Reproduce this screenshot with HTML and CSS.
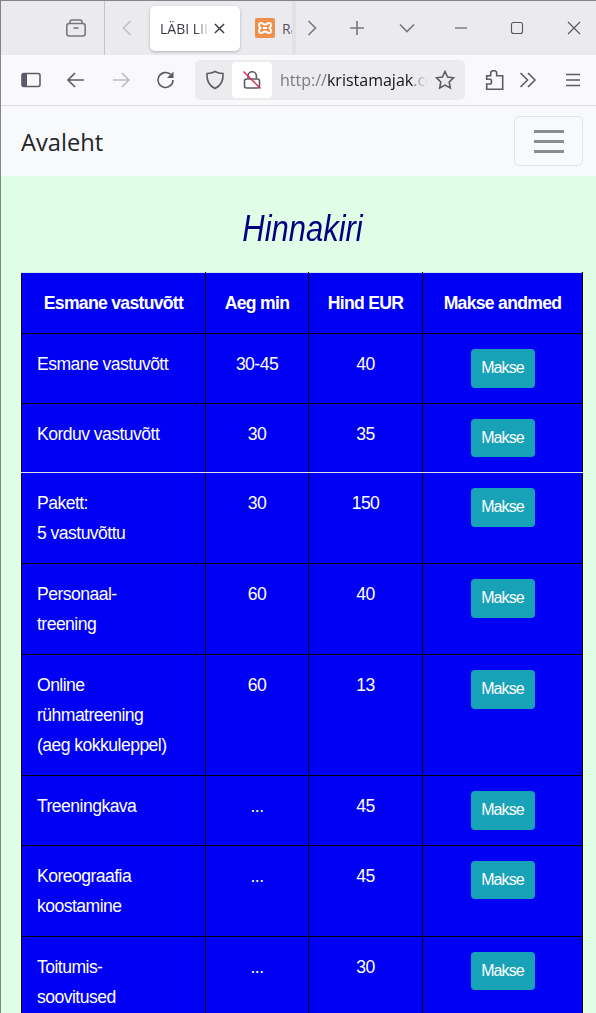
FILE: index.html
```html
<!DOCTYPE html>
<html lang="et">
<head>
  <meta charset="UTF-8" />
  <meta name="viewport" content="width=device-width, initial-scale=1.0"/>
  <title>Hinnakiri</title>
  <link rel="stylesheet" href="styles.css">
</head>
<body>
  <!-- Browser tab strip -->
  <div class="tabstrip">
    <svg class="icon view-icon" viewBox="0 0 20 20"><path d="M4 5.500 V4 a2 2 0 0 1 2-2 h8 a2 2 0 0 1 2 2 V5.500"/><rect x="0.800" y="5.500" width="18.400" height="12.500" rx="2.500"/><path d="M7.500 10 h5"/></svg>
    <div class="strip-divider"></div>
    <svg class="icon tabs-left" viewBox="0 0 20 20"><path d="M13.500 3 L6.500 10 L13.500 17"/></svg>
    <div class="tab">
      <span class="tab-title">LÄBI LIIGU</span>
      <svg class="tab-close" viewBox="0 0 12 12"><path d="M1 1 L11 11 M11 1 L1 11"/></svg>
    </div>
    <svg class="favicon" viewBox="0 0 20 20"><rect width="20" height="20" rx="2" fill="#ee8f4a"/><path d="M6 5 C8 5 8.500 6.500 10 6.500 C11.500 6.500 12 5 14 5 C16.500 5 16.500 8.500 14.500 10 C16.500 11.500 16.500 15 14 15 C12 15 11.500 13.500 10 13.500 C8.500 13.500 8 15 6 15 C3.500 15 3.500 11.500 5.500 10 C3.500 8.500 3.500 5 6 5 Z M8 10 h4" fill="none" stroke="#fff" stroke-width="2"/></svg>
    <span class="tab-next">Ra</span>
    <div class="tab-sep"></div>
    <svg class="icon tabs-right" viewBox="0 0 20 20"><path d="M6.500 3 L13.500 10 L6.500 17"/></svg>
    <svg class="icon new-tab" viewBox="0 0 20 20"><path d="M10 3 V17 M3 10 H17"/></svg>
    <svg class="icon all-tabs" viewBox="0 0 20 20"><path d="M3 6.500 L10 13.500 L17 6.500"/></svg>
    <svg class="win-icon win-min" viewBox="0 0 14 14"><path d="M1 7 H13"/></svg>
    <svg class="win-icon win-max" viewBox="0 0 14 14"><rect x="1.500" y="1.500" width="11" height="11" rx="2"/></svg>
    <svg class="win-icon win-close" viewBox="0 0 14 14"><path d="M1 1 L13 13 M13 1 L1 13"/></svg>
  </div>

  <!-- Browser toolbar -->
  <div class="toolbar">
    <svg class="tool tool-sidebar" viewBox="0 0 20 20"><rect x="1" y="3.500" width="18" height="13" rx="2"/><path class="filled" d="M1 5.500 a2 2 0 0 1 2-2 h3 v13 h-3 a2 2 0 0 1-2-2 Z"/></svg>
    <svg class="tool tool-back" viewBox="0 0 20 20"><path d="M18 10 H2 M9 3 L2 10 L9 17"/></svg>
    <svg class="tool tool-forward" viewBox="0 0 20 20"><path d="M2 10 H18 M11 3 L18 10 L11 17"/></svg>
    <svg class="tool tool-reload" viewBox="0 0 20 20"><path d="M17 10 A7.500 7.500 0 1 1 14.500 4.400"/><path class="filled" d="M17.500 1.500 V8 H11 Z"/></svg>
    <div class="urlbar">
      <svg class="tool url-shield" viewBox="0 0 20 20"><path d="M10 1.500 C12.500 3 15 3.500 18 3.500 C18.500 11 15.500 16 10 18.500 C4.500 16 1.500 11 2 3.500 C5 3.500 7.500 3 10 1.500 Z"/></svg>
      <div class="lock-box">
        <svg class="tool" viewBox="0 0 20 20"><path d="M6 8.500 V6 a4.200 4.200 0 0 1 8.400 0 V8.500"/><rect x="2.500" y="9" width="15" height="9" rx="2"/><path class="slash" d="M1.500 1.500 L18.500 18.500"/></svg>
      </div>
      <div class="url-text">http://<span class="url-host">kristamajak</span>.com</div>
      <svg class="tool url-star" viewBox="0 0 20 20"><path d="M10 1.500 L12.600 7 L18.500 7.800 L14.200 12 L15.300 18 L10 15.100 L4.700 18 L5.800 12 L1.500 7.800 L7.400 7 Z"/></svg>
    </div>
    <svg class="tool tool-ext" viewBox="0 0 20 20"><path d="M2.700 5.700 H6.700 V3 C6.700 0 12.700 0 12.700 3 V5.700 H18.700 V19.300 H2.700 V14 H6 C8 14 8 9.300 6 9.300 H2.700 Z"/></svg>
    <svg class="tool tool-more" viewBox="0 0 20 20"><path d="M2.500 3 L9.500 10 L2.500 17 M10 3 L17 10 L10 17"/></svg>
    <svg class="tool tool-menu" viewBox="0 0 20 20"><path d="M3 4.500 H17 M3 10 H17 M3 15.500 H17"/></svg>
  </div>

  <!-- Navigation Bar -->
  <nav class="navbar">
    <a class="brand" href="#">Avaleht</a>
    <button class="toggler"><span class="bar"></span><span class="bar"></span><span class="bar"></span></button>
  </nav>

  <div class="main-content">
    <h1>Hinnakiri</h1>
    <table class="price-table">
      <colgroup><col class="col-name"><col class="col-time"><col class="col-price"><col class="col-pay"></colgroup>
      <thead>
        <tr><th>Esmane vastuvõtt</th><th>Aeg min</th><th>Hind EUR</th><th>Makse andmed</th></tr>
      </thead>
      <tbody id="prices">
        <tr><td>Esmane vastuvõtt</td><td>30-45</td><td>40</td><td><a class="pay-btn">Makse</a></td></tr>
        <tr class="light-bottom"><td>Korduv vastuvõtt</td><td>30</td><td>35</td><td><a class="pay-btn">Makse</a></td></tr>
        <tr><td>Pakett:<br>5 vastuvõttu</td><td>30</td><td>150</td><td><a class="pay-btn">Makse</a></td></tr>
        <tr><td>Personaal-<br>treening</td><td>60</td><td>40</td><td><a class="pay-btn">Makse</a></td></tr>
        <tr><td>Online<br>rühmatreening<br>(aeg kokkuleppel)</td><td>60</td><td>13</td><td><a class="pay-btn">Makse</a></td></tr>
        <tr><td>Treeningkava</td><td>...</td><td>45</td><td><a class="pay-btn">Makse</a></td></tr>
        <tr><td>Koreograafia<br>koostamine</td><td>...</td><td>45</td><td><a class="pay-btn">Makse</a></td></tr>
        <tr><td>Toitumis-<br>soovitused</td><td>...</td><td>30</td><td><a class="pay-btn">Makse</a></td></tr>
      </tbody>
    </table>
  </div>
</body>
</html>
```
FILE: styles.css
```css
html, body {
  margin: 0;
  height: 1013px;
  overflow: hidden;
}

body {
  font-family: "Liberation Sans", Arial, sans-serif;
  background: #e0fee6;
  border-left: 1px solid #858585;
  border-top: 1px solid #858585;
  box-sizing: border-box;
}

/* Tab strip */
.tabstrip {
  display: flex;
  align-items: center;
  height: 54px;
  background: #ebebef;
}

.icon, .tool, .win-icon {
  flex: none;
  fill: none;
  stroke: #5b5b66;
  stroke-width: 1.6;
}

.icon {
  width: 20px;
  height: 20px;
  stroke: #77777f;
}

.view-icon { margin-left: 65px; }

.strip-divider {
  width: 1px;
  height: 54px;
  margin-left: 18px;
  background: #c4c4c8;
}

.tabs-left {
  margin-left: 12px;
  stroke: #c0c0c5;
}

.tab {
  display: flex;
  flex: none;
  align-items: center;
  width: 90px;
  height: 45px;
  margin-left: 13px;
  margin-top: 1px;
  background: #fff;
  border-radius: 5px;
  box-shadow: 0 1px 3px rgba(0,0,0,0.25);
  box-sizing: border-box;
  padding-left: 10px;
  font-family: "Open Sans", sans-serif;
  font-size: 14px;
  color: #3a3a42;
}

.tab-title {
  width: 50px;
  overflow: hidden;
  white-space: nowrap;
  -webkit-mask-image: linear-gradient(to right, #000 70%, transparent);
  mask-image: linear-gradient(to right, #000 70%, transparent);
}

.tab-close {
  flex: none;
  width: 11px;
  height: 11px;
  margin-left: 4px;
  fill: none;
  stroke: #3a3a42;
  stroke-width: 1.5;
}

.favicon {
  flex: none;
  width: 20px;
  height: 20px;
  margin-left: 15px;
}

.tab-next {
  flex: none;
  width: 10px;
  margin-left: 7px;
  overflow: hidden;
  font-family: "Open Sans", sans-serif;
  font-size: 14px;
  color: #55555c;
}

.tab-sep {
  flex: none;
  width: 4px;
  height: 54px;
  background: #e2e2e6;
}

.tabs-right { margin-left: 6px; }
.new-tab { margin-left: 25px; }
.all-tabs { margin-left: 30px; }

.win-icon {
  stroke: #55555c;
  stroke-width: 1.1;
  width: 14px;
  height: 14px;
}

.win-min { margin-left: 37px; }
.win-max { margin-left: 42px; }
.win-close { margin-left: 43px; }

/* Toolbar */
.toolbar {
  display: flex;
  align-items: center;
  height: 50px;
  background: #f9f9fb;
  border-bottom: 1px solid #dcdcde;
}

.tool {
  width: 20px;
  height: 20px;
}

.tool .filled {
  fill: #5b5b66;
  stroke: none;
}

.tool-sidebar { margin-left: 20px; }
.tool-back { margin-left: 25px; }
.tool-forward { margin-left: 25px; stroke: #bcbcc2; }
.tool-reload { margin-left: 25px; }

.urlbar {
  display: flex;
  flex: none;
  align-items: center;
  width: 270px;
  height: 40px;
  margin-left: 19px;
  background: #ececef;
  border-radius: 5px;
}

.url-shield { margin-left: 10px; }

.lock-box {
  display: flex;
  flex: none;
  align-items: center;
  justify-content: center;
  width: 40px;
  height: 36px;
  margin-left: 7px;
  background: #fff;
  border-radius: 4px;
}

.lock-box .slash {
  stroke: #e22850;
  stroke-width: 1.5;
}

.url-text {
  flex: none;
  width: 148px;
  margin-left: 8px;
  overflow: hidden;
  white-space: nowrap;
  font-family: "Open Sans", sans-serif;
  font-size: 16px;
  color: #7a7a80;
  -webkit-mask-image: linear-gradient(to right, #000 90%, transparent);
  mask-image: linear-gradient(to right, #000 90%, transparent);
}

.url-host { color: #15141a; }

.url-star { margin-left: 7px; }
.tool-ext { margin-left: 19px; }
.tool-more { margin-left: 14px; }
.tool-menu { margin-left: 25px; }

/* Top Navigation Bar */
.navbar {
  display: flex;
  align-items: center;
  justify-content: space-between;
  height: 70px;
  padding: 0 13px 0 20px;
  background: #f8f9fa;
}

.brand {
  margin-top: 1px;
  font-family: "Open Sans", sans-serif;
  font-size: 23.700px;
  color: #212529;
  text-decoration: none;
}

.toggler {
  display: flex;
  flex-direction: column;
  align-items: center;
  justify-content: center;
  gap: 7px;
  width: 69px;
  height: 50px;
  padding: 0;
  background: transparent;
  border: 1px solid #e3e4e5;
  border-radius: 5px;
}

.bar {
  width: 30px;
  height: 3px;
  background: #8a8c8e;
}

.main-content {
  padding: 0 12px 0 20px;
}

h1 {
  margin: 0;
  padding-top: 31px;
  height: 65px;
  font-size: 36px;
  line-height: 44px;
  font-weight: 400;
  font-style: italic;
  color: #000080;
  text-align: center;
  transform: scaleX(0.86);
}

/* Price table */
.price-table {
  width: 562px;
  table-layout: fixed;
  border-collapse: collapse;
  background: #0000f5;
  color: #fff;
  font-size: 17.600px;
  line-height: 30px;
  letter-spacing: -0.550px;
}

.col-name { width: 184px; }
.col-time { width: 103px; }
.col-price { width: 114px; }
.col-pay { width: 160px; }

.price-table th, .price-table td {
  padding: 15px;
  border: 1px solid #000;
  vertical-align: top;
  text-align: center;
}

.price-table th {
  font-weight: 700;
  letter-spacing: -0.700px;
  border-top-color: #cfe3e0;
}

.price-table td:first-child {
  text-align: left;
}

.light-bottom td {
  border-bottom-color: #dee2e6;
}

.pay-btn {
  display: block;
  width: 64px;
  height: 38.500px;
  margin: 0 auto;
  line-height: 38px;
  background: #17a2b8;
  border-radius: 4px;
  font-size: 16px;
  letter-spacing: -0.900px;
  color: #fff;
}
```
